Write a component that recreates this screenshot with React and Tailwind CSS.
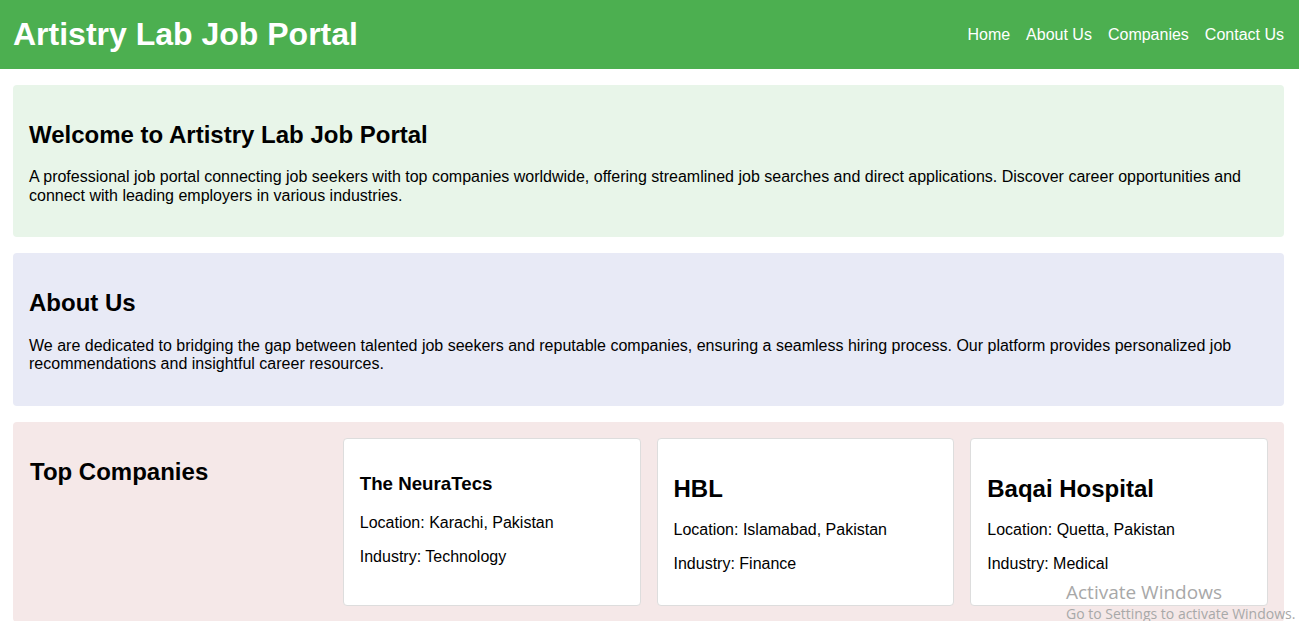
import React from "react";

const companies = [
  { name: "The NeuraTecs", h: "h3", location: "Karachi, Pakistan", industry: "Technology" },
  { name: "HBL", h: "h2", location: "Islamabad, Pakistan", industry: "Finance" },
  { name: "Baqai Hospital", h: "h2", location: "Quetta, Pakistan", industry: "Medical" },
];

export default function App() {
  return (
    <div className="min-h-[621px] bg-white text-black font-['Liberation_Sans',Arial,sans-serif] relative overflow-hidden">
      <header className="bg-[#4caf50] text-white flex items-center justify-between pl-[13px] pr-[15px] py-4">
        <h1 className="text-[32px] font-bold leading-[36.8px] m-0">Artistry Lab Job Portal</h1>
        <nav className="flex gap-4 text-[16px] leading-[18.4px] mt-[2px]">
          <a href="#">Home</a>
          <a href="#">About Us</a>
          <a href="#">Companies</a>
          <a href="#">Contact Us</a>
        </nav>
      </header>

      <main className="pl-[13px] pr-[15px] pt-4 flex flex-col gap-4">
        <section className="bg-[#e8f5e9] rounded p-4">
          <h2 className="text-[24px] font-bold leading-[27.6px] my-[20px]">Welcome to Artistry Lab Job Portal</h2>
          <p className="text-[16px] leading-[18.4px] mb-4">
            A professional job portal connecting job seekers with top companies worldwide, offering streamlined job searches and direct applications. Discover career opportunities and connect with leading employers in various industries.
          </p>
        </section>

        <section className="bg-[#e8eaf6] rounded p-4">
          <h2 className="text-[24px] font-bold leading-[27.6px] my-[20px]">About Us</h2>
          <p className="text-[16px] leading-[18.4px] mb-4">
            We are dedicated to bridging the gap between talented job seekers and reputable companies, ensuring a seamless hiring process. Our platform provides personalized job recommendations and insightful career resources.
          </p>
        </section>

        <section className="bg-[#f5e8e8] rounded p-4 grid grid-cols-4 gap-4">
          <h2 className="text-[24px] font-bold leading-[27.6px] mt-[20px] pl-px">Top Companies</h2>
          {companies.map((c) => (
            <div key={c.name} className="bg-white border border-[#dddddd] rounded px-4 pt-4 pb-4">
              {c.h === "h3" ? (
                <h3 className="text-[18.72px] font-bold leading-[21.5px] my-[18.72px]">{c.name}</h3>
              ) : (
                <h2 className="text-[24px] font-bold leading-[27.6px] mt-[19.92px] mb-[19px]">{c.name}</h2>
              )}
              <p className="text-[16px] leading-[18px] mb-4">Location: {c.location}</p>
              <p className="text-[16px] leading-[18px] mb-4">Industry: {c.industry}</p>
            </div>
          ))}
        </section>
      </main>

      <div className="absolute left-[1066px] top-[580px] pointer-events-none font-['Open_Sans',sans-serif] text-[#a8a8a8] whitespace-nowrap">
        <div className="text-[19px] leading-[24px]">Activate Windows</div>
        <div className="text-[14px] leading-[18px] mt-[1px]">Go to Settings to activate Windows.</div>
      </div>
    </div>
  );
}
